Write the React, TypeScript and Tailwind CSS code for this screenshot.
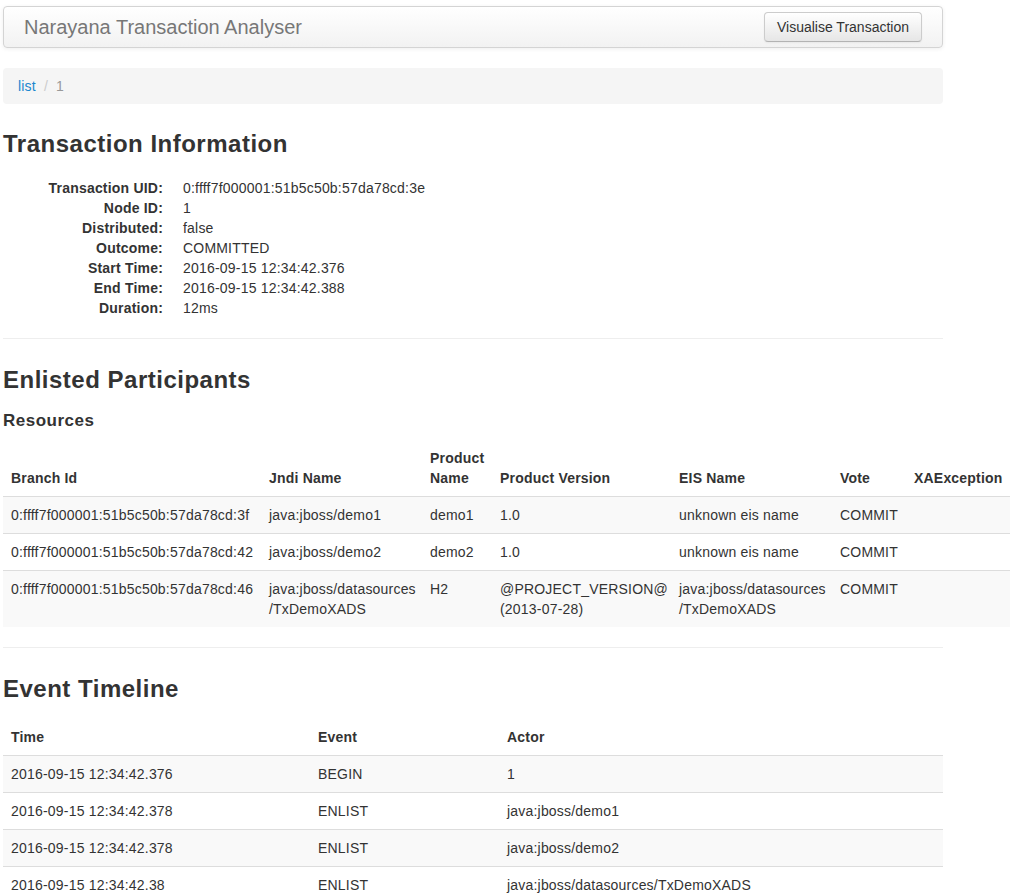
import { Fragment } from 'react'

const INFO: [string, string][] = [
  ['Transaction UID:', '0:ffff7f000001:51b5c50b:57da78cd:3e'],
  ['Node ID:', '1'],
  ['Distributed:', 'false'],
  ['Outcome:', 'COMMITTED'],
  ['Start Time:', '2016-09-15 12:34:42.376'],
  ['End Time:', '2016-09-15 12:34:42.388'],
  ['Duration:', '12ms'],
]

const RES_COLS = [
  { label: 'Branch Id', w: 'w-[258px]' },
  { label: 'Jndi Name', w: 'w-[161px]' },
  { label: 'Product Name', w: 'w-[70px]' },
  { label: 'Product Version', w: 'w-[179px]' },
  { label: 'EIS Name', w: 'w-[161px]' },
  { label: 'Vote', w: 'w-[74px]' },
  { label: 'XAException', w: 'w-[104px]' },
]

const RESOURCES = [
  { branch: '0:ffff7f000001:51b5c50b:57da78cd:3f', jndi: ['java:jboss/demo1'], product: 'demo1', version: '1.0', eis: ['unknown eis name'], vote: 'COMMIT' },
  { branch: '0:ffff7f000001:51b5c50b:57da78cd:42', jndi: ['java:jboss/demo2'], product: 'demo2', version: '1.0', eis: ['unknown eis name'], vote: 'COMMIT' },
  { branch: '0:ffff7f000001:51b5c50b:57da78cd:46', jndi: ['java:jboss/datasources', '/TxDemoXADS'], product: 'H2', version: '@PROJECT_VERSION@ (2013-07-28)', eis: ['java:jboss/datasources', '/TxDemoXADS'], vote: 'COMMIT' },
]

const EVENTS = [
  { time: '2016-09-15 12:34:42.376', event: 'BEGIN', actor: '1' },
  { time: '2016-09-15 12:34:42.378', event: 'ENLIST', actor: 'java:jboss/demo1' },
  { time: '2016-09-15 12:34:42.378', event: 'ENLIST', actor: 'java:jboss/demo2' },
  { time: '2016-09-15 12:34:42.38', event: 'ENLIST', actor: 'java:jboss/datasources/TxDemoXADS' },
]

const th = 'px-2 py-2 text-left align-bottom font-bold border-b border-[#ddd]'
const td = 'px-2 py-2 text-left align-top border-t border-[#ddd]'

function Broken({ parts }: { parts: string[] }) {
  return (
    <>
      {parts.map((p, i) => (
        <Fragment key={i}>{p}{i < parts.length - 1 && <wbr />}</Fragment>
      ))}
    </>
  )
}

export default function App() {
  return (
    <div className="min-h-screen bg-white text-[#333] text-[14px] leading-5 tracking-[0.2px] font-['Liberation_Sans',Arial,sans-serif] pl-[3px] pt-[6px] pb-10">
      <div className="w-[940px]">
        <nav className="h-[42px] flex items-center justify-between pl-[20px] pr-[20px] border border-[#d4d4d4] rounded bg-gradient-to-b from-white to-[#f2f2f2] shadow-[0_1px_4px_rgba(0,0,0,0.065)]">
          <span className="text-[20px] tracking-normal text-[#777]">Narayana Transaction Analyser</span>
          <button className="h-[30px] px-3 border border-[#ccc] border-b-[#b3b3b3] rounded bg-gradient-to-b from-white to-[#e6e6e6] text-[#333] tracking-normal shadow-[inset_0_1px_0_rgba(255,255,255,0.2),0_1px_2px_rgba(0,0,0,0.05)]">
            Visualise Transaction
          </button>
        </nav>

        <div className="mt-[20px] h-[36px] flex items-center px-[15px] bg-[#f5f5f5] rounded">
          <a className="text-[#1a87cf]">list</a>
          <span className="px-[8px] text-[#ccc]">/</span>
          <span className="text-[#999]">1</span>
        </div>

        <h2 className="mt-[27px] text-[24px] leading-[26px] font-bold tracking-[0.5px]">Transaction Information</h2>

        <dl className="mt-[21px]">
          {INFO.map(([k, v]) => (
            <div key={k} className="flex">
              <dt className="w-[160px] text-right font-bold">{k}</dt>
              <dd className="ml-[20px]">{v}</dd>
            </div>
          ))}
        </dl>

        <hr className="mt-[20px] border-0 border-t border-[#eee]" />

        <h2 className="mt-[28px] text-[24px] leading-[26px] font-bold tracking-[0.5px]">Enlisted Participants</h2>
        <h4 className="mt-[18px] text-[17px] leading-5 font-bold tracking-[0.5px]">Resources</h4>
      </div>

      <table className="mt-[9px] w-[1007px] table-fixed">
        <thead>
          <tr>
            {RES_COLS.map((c) => (
              <th key={c.label} className={`${th} ${c.w}`}>{c.label}</th>
            ))}
          </tr>
        </thead>
        <tbody>
          {RESOURCES.map((r, i) => (
            <tr key={r.branch} className={i % 2 === 0 ? 'bg-[#f9f9f9]' : 'bg-white'}>
              <td className={td}>{r.branch}</td>
              <td className={td}><Broken parts={r.jndi} /></td>
              <td className={td}>{r.product}</td>
              <td className={td}>{r.version}</td>
              <td className={td}><Broken parts={r.eis} /></td>
              <td className={td}>{r.vote}</td>
              <td className={td}></td>
            </tr>
          ))}
        </tbody>
      </table>

      <div className="w-[940px]">
        <hr className="mt-[20px] border-0 border-t border-[#eee]" />
        <h2 className="mt-[28px] text-[24px] leading-[26px] font-bold tracking-[0.5px]">Event Timeline</h2>

        <table className="mt-[17px] w-[940px] table-fixed">
          <thead>
            <tr>
              <th className={`${th} w-[307px]`}>Time</th>
              <th className={`${th} w-[189px]`}>Event</th>
              <th className={`${th} w-[444px]`}>Actor</th>
            </tr>
          </thead>
          <tbody>
            {EVENTS.map((e, i) => (
              <tr key={i} className={i % 2 === 0 ? 'bg-[#f9f9f9]' : 'bg-white'}>
                <td className={td}>{e.time}</td>
                <td className={td}>{e.event}</td>
                <td className={td}>{e.actor}</td>
              </tr>
            ))}
          </tbody>
        </table>
      </div>
    </div>
  )
}
